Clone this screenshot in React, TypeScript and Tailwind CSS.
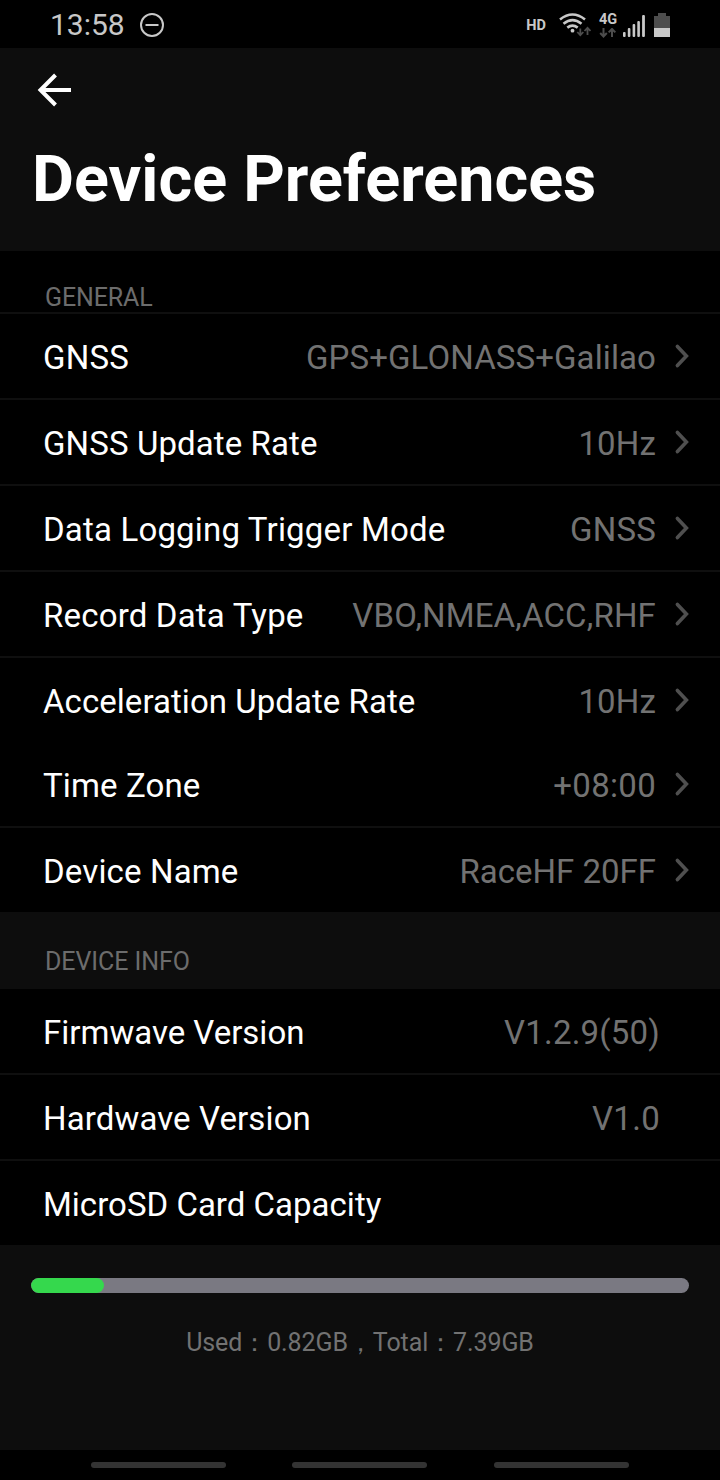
import React from 'react';

type RowProps = {
  label: string;
  value?: string;
  border?: boolean;
  arrow?: boolean;
  height?: string;
  labelTracking?: string;
  valueTracking?: string;
};

function Row({ label, value, border = true, arrow = true, height = 'h-[86px]', labelTracking = '', valueTracking = '' }: RowProps) {
  return (
    <div className={`${height} flex shrink-0 items-center justify-between bg-black pl-[43px] ${arrow ? 'pr-[29px]' : 'pr-[60px]'} ${border ? 'border-b-2 border-[#0f0f0f]' : ''}`}>
      <span className={`pt-[4px] text-[33px] leading-[40px] whitespace-nowrap text-white ${labelTracking}`}>{label}</span>
      <div className="flex items-center">
        {value && <span className={`pt-[4px] text-[33px] leading-[40px] whitespace-nowrap text-[#727272] ${valueTracking}`}>{value}</span>}
        {arrow && (
          <svg className="ml-[18px]" width="17" height="26" viewBox="0 0 17 26" fill="none" stroke="#4f4f4f" strokeWidth="3.6" strokeLinecap="round">
            <path d="M3.4 3.4L12.4 13L3.4 22.6" />
          </svg>
        )}
      </div>
    </div>
  );
}

function StatusIcons() {
  return (
    <div className="flex h-12 items-start text-[#c8c8c8]">
      <span className="mt-[16px] text-[14.5px] leading-[20px] font-bold">HD</span>
      <svg className="mt-[10px] ml-[11px]" width="34" height="30" viewBox="557 10 34 30" fill="none">
        <g stroke="#c8c8c8" strokeWidth="2.6">
          <path d="M560 19.4Q572.5 9.6 585 19.4" />
          <path d="M563.5 23.7Q572.5 16.4 581.5 23.7" />
          <path d="M567.3 27.6Q572.5 23.6 577.7 27.6" />
        </g>
        <circle cx="572.5" cy="30.7" r="1.9" fill="#c8c8c8" />
        <g stroke="#4d4d4d" strokeWidth="1.8">
          <path d="M580.3 28.5V35M577.3 32L580.3 35.2L583.3 32" />
          <path d="M587.5 35V28M584.5 31L587.5 27.8L590.5 31" />
        </g>
      </svg>
      <div className="ml-[8px] flex w-[20px] flex-col">
        <span className="mt-[12px] text-[14.5px] leading-[16px] font-bold">4G</span>
        <svg width="18" height="12" viewBox="0 0 18 12" fill="none" stroke="#4d4d4d" strokeWidth="2">
          <path d="M4.5 0V8.5M1.2 5L4.5 8.5L7.8 5M13 9V0.9M9.7 4.4L13 0.9L16.3 4.4" />
        </svg>
      </div>
      <svg className="mt-[10px] ml-[3px]" width="24" height="30" viewBox="622 10 24 30" fill="#c8c8c8">
        <rect x="623" y="32" width="2.6" height="5" rx="1" />
        <rect x="627.8" y="28" width="2.6" height="9" rx="1" />
        <rect x="632.6" y="24" width="2.6" height="13" rx="1" />
        <rect x="637.3" y="21" width="2.6" height="16" rx="1" />
        <rect x="642.1" y="15" width="2.8" height="22" rx="1" />
      </svg>
      <svg className="mt-[10px] ml-[8px]" width="16" height="30" viewBox="654 10 16 30">
        <path d="M658 13H666V16H670V28H654V16H658Z" fill="#4d4d4d" />
        <rect x="654" y="28" width="16" height="9" fill="#c8c8c8" />
      </svg>
    </div>
  );
}

export default function App() {
  return (
    <div className="flex h-[1480px] w-[720px] flex-col overflow-hidden bg-[#0d0d0d] font-[Roboto,sans-serif]">
      <div className="flex h-12 shrink-0 items-center justify-between bg-black pr-[50px] pl-[50px]">
        <div className="flex items-center gap-[14px] pt-[2px]">
          <span className="text-[30px] leading-[36px] text-[#c8c8c8]">13:58</span>
          <svg width="26" height="26" viewBox="0 0 26 26" fill="none" stroke="#c8c8c8" strokeWidth="2">
            <circle cx="13" cy="13" r="11" />
            <path d="M6.5 13H19.5" />
          </svg>
        </div>
        <StatusIcons />
      </div>
      <header className="h-[203px] shrink-0 pt-[24px] pl-[31px]">
        <svg width="42" height="36" viewBox="0 0 42 36" fill="none" stroke="white" strokeWidth="4">
          <path d="M40 18H9M24.5 3L9.5 18L24.5 33" />
        </svg>
        <h1 className="mt-[31px] ml-px text-[64.7px] leading-[80px] font-bold whitespace-nowrap text-white">Device Preferences</h1>
      </header>
      <div className="h-[63px] shrink-0 border-b-2 border-[#0f0f0f] bg-black pt-[31px] pl-[45px] text-[25px] leading-[32px] tracking-[-0.12px] text-[#6c6c6c]">GENERAL</div>
      <Row label="GNSS" value="GPS+GLONASS+Galilao" labelTracking="tracking-[0.2px]" valueTracking="tracking-[0.1px]" />
      <Row label="GNSS Update Rate" value="10Hz" labelTracking="tracking-[0.1px]" valueTracking="tracking-[0.15px]" />
      <Row label="Data Logging Trigger Mode" value="GNSS" labelTracking="tracking-[0.18px]" valueTracking="tracking-[0.2px]" />
      <Row label="Record Data Type" value="VBO,NMEA,ACC,RHF" labelTracking="tracking-[0.18px]" valueTracking="tracking-[0.16px]" />
      <Row label="Acceleration Update Rate" value="10Hz" border={false} height="h-[84px]" labelTracking="tracking-[0.05px]" valueTracking="tracking-[0.15px]" />
      <Row label="Time Zone" value="+08:00" labelTracking="tracking-[0.12px]" valueTracking="tracking-[0.3px]" />
      <Row label="Device Name" value="RaceHF 20FF" border={false} height="h-[84px]" labelTracking="tracking-[0.15px]" />
      <div className="h-[77px] shrink-0 pt-[34px] pl-[45px] text-[25px] leading-[32px] tracking-[-0.08px] text-[#6c6c6c]">DEVICE INFO</div>
      <Row label="Firmwave Version" value="V1.2.9(50)" arrow={false} valueTracking="tracking-[0.2px]" />
      <Row label="Hardwave Version" value="V1.0" arrow={false} labelTracking="tracking-[0.12px]" valueTracking="tracking-[0.3px]" />
      <Row label="MicroSD Card Capacity" arrow={false} border={false} height="h-[84px]" labelTracking="tracking-[0.02px]" />
      <div className="mx-[31px] mt-[33px] h-[15px] shrink-0 overflow-hidden rounded-full bg-[#7a7982]">
        <div className="h-full w-[73px] rounded-full bg-[#35d84d]" />
      </div>
      <p className="mt-[34px] text-center text-[25px] leading-[32px] tracking-[-0.1px] text-[#727272]">Used：0.82GB，Total：7.39GB</p>
      <nav className="mt-auto flex h-[30px] shrink-0 gap-[66px] bg-black pt-[12px] pl-[91px]">
        <div className="h-[6px] w-[135px] rounded-full bg-[#333333]" />
        <div className="h-[6px] w-[135px] rounded-full bg-[#333333]" />
        <div className="ml-px h-[6px] w-[135px] rounded-full bg-[#333333]" />
      </nav>
    </div>
  );
}
